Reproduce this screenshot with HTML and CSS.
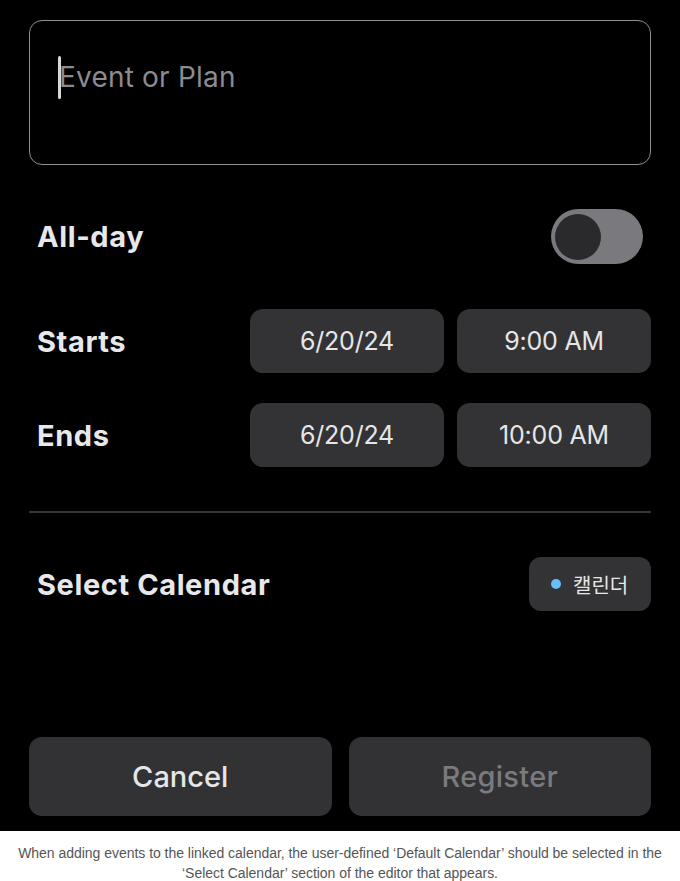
FILE: index.html
```html
<!DOCTYPE html>
<html>
<head>
<meta charset="utf-8">
<link rel="stylesheet" href="styles.css">
</head>
<body>
<div class="screen">
  <div class="title-box">
    <span class="cursor"></span><span class="placeholder">Event or Plan</span>
  </div>

  <div class="row allday">
    <span class="label">All-day</span>
    <div class="toggle"><div class="knob"></div></div>
  </div>

  <div class="row datetime first">
    <span class="label">Starts</span>
    <div class="pills">
      <div class="pill">6/20/24</div>
      <div class="pill">9:00 AM</div>
    </div>
  </div>

  <div class="row datetime">
    <span class="label">Ends</span>
    <div class="pills">
      <div class="pill">6/20/24</div>
      <div class="pill">10:00 AM</div>
    </div>
  </div>

  <div class="divider"></div>

  <div class="row calendar">
    <span class="label">Select Calendar</span>
    <div class="chip"><span class="dot"></span><span class="chip-text">캘린더</span></div>
  </div>

  <div class="actions">
    <div class="btn cancel">Cancel</div>
    <div class="btn register">Register</div>
  </div>
</div>
<p class="caption">When adding events to the linked calendar, the user-defined ‘Default Calendar’ should be selected in the ‘Select Calendar’ section of the editor that appears.</p>
</body>
</html>
```

FILE: styles.css
```css
html, body {
  margin: 0;
  padding: 0;
  background: #ffffff;
}

.screen {
  background: #000000;
  width: 680px;
  box-sizing: border-box;
  padding: 20px 29px 15px 29px;
  font-family: Inter, "Noto Sans", "Noto Sans CJK KR", sans-serif;
  color: #e6e6e9;
}

.title-box {
  height: 145px;
  box-sizing: border-box;
  border: 1.5px solid #8e8e93;
  border-radius: 13px;
  padding: 34px 0 0 28px;
  display: flex;
  align-items: flex-start;
}

.cursor {
  width: 3px;
  height: 43px;
  background: #d8d8dc;
  border-radius: 2px;
  margin-top: 1px;
  margin-right: -2px;
}

.placeholder {
  font-size: 28px;
  line-height: 45px;
  color: #8b8b90;
  letter-spacing: 0.2px;
}

.row {
  display: flex;
  align-items: center;
  justify-content: space-between;
}

.label {
  font-size: 29px;
  font-weight: 700;
  color: #e8e8eb;
  padding-left: 8px;
  letter-spacing: 0.6px;
}

.allday {
  margin-top: 44px;
  height: 55px;
}

.toggle {
  width: 92px;
  height: 55px;
  border-radius: 28px;
  background: #79797e;
  margin-right: 8px;
  display: flex;
  align-items: center;
  padding-left: 4px;
  box-sizing: border-box;
}

.knob {
  width: 46px;
  height: 46px;
  border-radius: 50%;
  background: #2a2a2d;
}

.datetime {
  height: 64px;
  margin-top: 30px;
}

.datetime.first {
  margin-top: 45px;
}

.pills {
  display: flex;
  gap: 13px;
}

.pill {
  width: 194px;
  height: 64px;
  border-radius: 13px;
  background: #333335;
  display: flex;
  align-items: center;
  justify-content: center;
  font-size: 25px;
  color: #e6e6e9;
  letter-spacing: -0.2px;
}

.divider {
  height: 2px;
  background: #38383a;
  margin-top: 44px;
}

.calendar {
  margin-top: 44px;
  height: 54px;
}

.chip {
  width: 122px;
  height: 54px;
  border-radius: 12px;
  background: #333335;
  display: flex;
  align-items: center;
  box-sizing: border-box;
  padding-left: 22px;
  gap: 12px;
}

.dot {
  width: 10px;
  height: 10px;
  border-radius: 50%;
  background: #64c0f8;
}

.chip-text {
  font-family: "Noto Sans CJK KR", sans-serif;
  font-size: 20px;
  color: #e6e6e9;
}

.actions {
  display: flex;
  gap: 17px;
  margin-top: 126px;
}

.btn {
  flex: 1;
  height: 79px;
  border-radius: 13px;
  background: #323234;
  display: flex;
  align-items: center;
  justify-content: center;
  font-size: 29px;
  font-weight: 500;
}

.cancel {
  color: #e6e6e9;
}

.register {
  color: #7a7a7f;
  letter-spacing: 0.3px;
}

.caption {
  margin: 12px 0 0 0;
  padding: 0 16px;
  text-align: center;
  font-family: "Liberation Sans", Arial, sans-serif;
  font-size: 14px;
  line-height: 20px;
  color: #555555;
  letter-spacing: -0.03px;
}
```
